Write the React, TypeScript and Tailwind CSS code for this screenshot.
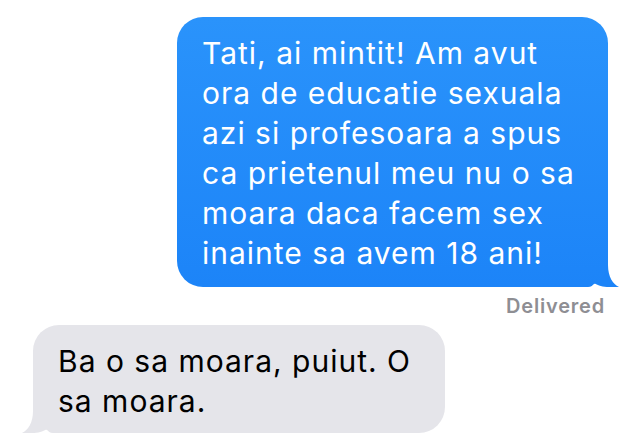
const sentLines = [
  "Tati, ai mintit! Am avut",
  "ora de educatie sexuala",
  "azi si profesoara a spus",
  "ca prietenul meu nu o sa",
  "moara daca facem sex",
  "inainte sa avem 18 ani!",
];

const replyLines = ["Ba o sa moara, puiut. O", "sa moara."];

function Tail({ color, className }: { color: string; className: string }) {
  return (
    <svg
      width="40"
      height="30"
      viewBox="0 0 40 30"
      className={`absolute bottom-0 ${className}`}
    >
      <path
        d="M0 30 L8 30 C11 30 13 28.5 14 26 C18 29 26 31 39 30 C33 27 28 20 28 8 L28 0 L0 0 Z"
        fill={color}
      />
    </svg>
  );
}

export default function App() {
  return (
    <div className="w-[640px] h-[443px] overflow-hidden bg-white flex flex-col pt-[17px] font-['Inter',sans-serif]">
      <div className="self-end mr-[32px] relative">
        <div className="relative z-10 w-[431px] rounded-[26px] bg-gradient-to-b from-[#2a93fb] to-[#1c84f8] pl-[25px] pt-[16px] pb-[14px] text-white text-[30px] leading-[40px] tracking-[1px] whitespace-nowrap">
          {sentLines.map((line, i) => (
            <div key={i}>{line}</div>
          ))}
        </div>
        <Tail color="#1c84f8" className="right-[-12px]" />
      </div>

      <div className="self-end mr-[35px] mt-[7px] text-[20px] leading-[24px] font-semibold tracking-[0.8px] text-[#8e8e93]">
        Delivered
      </div>

      <div className="self-start ml-[33px] mt-[7px] relative">
        <div className="relative z-10 w-[412px] rounded-[26px] bg-[#e5e5ea] pl-[25px] pt-[16px] pb-[12px] text-black text-[30px] leading-[40px] tracking-[1px] whitespace-nowrap">
          {replyLines.map((line, i) => (
            <div key={i}>{line}</div>
          ))}
        </div>
        <Tail color="#e5e5ea" className="left-[-12px] -scale-x-100" />
      </div>
    </div>
  );
}
